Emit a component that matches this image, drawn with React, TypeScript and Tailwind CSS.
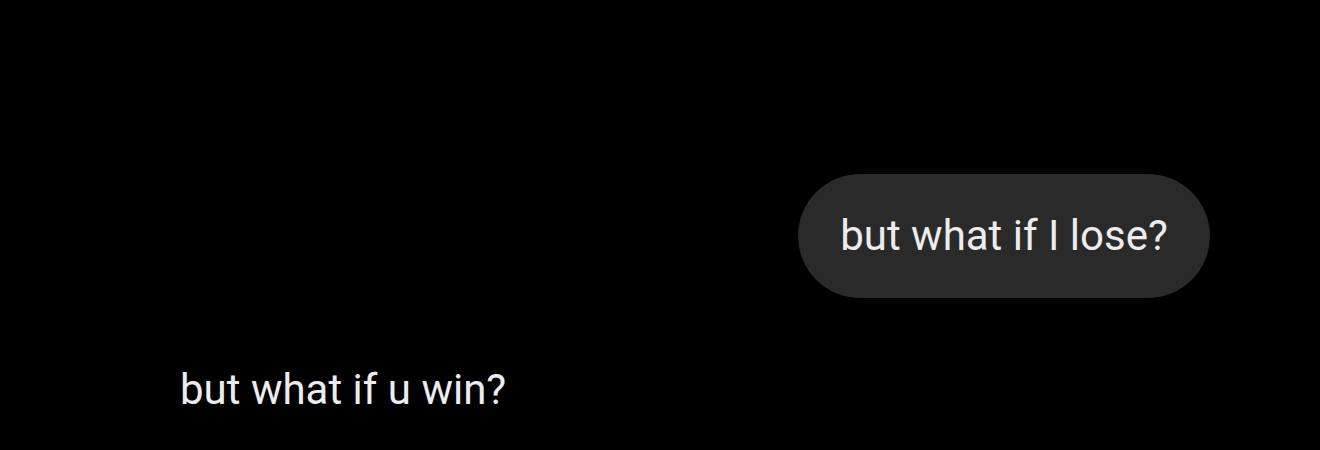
export default function App() {
  return (
    <div
      className="w-[1320px] h-[450px] bg-black overflow-hidden flex flex-col pt-[174px] text-[#ececec]"
      style={{ fontFamily: "Roboto, 'Noto Sans', sans-serif" }}
    >
      {/* outgoing message */}
      <div className="flex justify-end pr-[110px]">
        <div className="h-[124px] w-[412px] rounded-full bg-[#2a2a2a] flex items-center justify-center text-[42px] leading-none">
          but what if I lose?
        </div>
      </div>
      {/* incoming message */}
      <div className="pl-[180px] mt-[71px] text-[42px] leading-none">but what if u win?</div>
    </div>
  );
}
